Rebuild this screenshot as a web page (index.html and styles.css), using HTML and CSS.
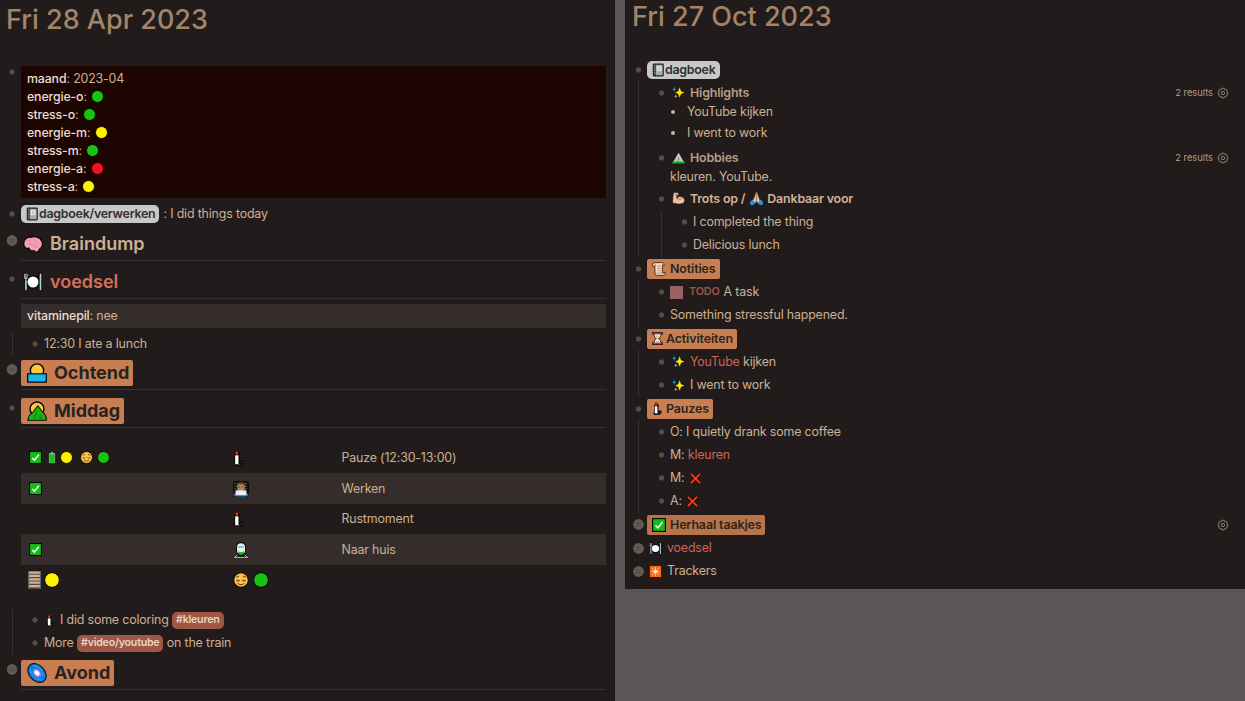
FILE: index.html
```
<!DOCTYPE html>
<html lang="nl">
<head>
<meta charset="utf-8">
<title>Dagboek</title>
<link rel="stylesheet" href="styles.css">
</head>
<body>
<svg class="sprite" aria-hidden="true">
  <symbol id="book" viewBox="0 0 24 24"><rect x="3" y="1" width="19" height="22" rx="2" fill="#222"/><path d="M6 3v18" stroke="#999" stroke-width="2" stroke-dasharray="1.5 1.5"/><rect x="8" y="3" width="12" height="18" fill="#a9a9a9"/><rect x="10" y="5" width="8" height="9" fill="#e8e8e8"/><path d="M12 8h4M12 11h4" stroke="#888"/></symbol>
  <symbol id="brain" viewBox="0 0 24 24"><path d="M1 13C0 7 5 3 9 4c5-2 12 0 13 4 3 3 1 8-2 10-1 4-5 5-7 2-3 1-5 0-6-3-3 1-6-1-6-4z" fill="#f5a0b4" stroke="#0b0808" stroke-width="1.6"/><path d="M6 8c3-1 4 2 3 4M12 5c-1 3 2 3 3 5M18 7c-3 1-2 4 1 5M5 13c2-2 4 0 6 0s3-1 5 2M12 17c1-2 4-1 6-2" fill="none" stroke="#dc7f98" stroke-width="1"/></symbol>
  <symbol id="plate" viewBox="0 0 24 24"><path d="M1 1h5v10l-1 12H2V11H1zM18 1h5v22h-4V12l-2-3z" fill="#050505"/><circle cx="12" cy="12" r="8" fill="#050505"/><circle cx="12" cy="12" r="6.6" fill="#fff"/><path d="M2 2v6h3V2M3.500 2v8" fill="none" stroke="#ddd"/><path d="M3.500 10v12M21 11v11" stroke="#9bd5ee" stroke-width="2"/><path d="M20 2v9h2V2z" fill="#ccc"/></symbol>
  <symbol id="sunwater" viewBox="0 0 24 24"><circle cx="12" cy="9" r="8" fill="#ffc83d" stroke="#080604" stroke-width="1.7"/><path d="M.8 13h22.400v10H.8z" fill="#1bb8ed" stroke="#080604" stroke-width="1.5"/><path d="M2 14h20" stroke="#08b" stroke-width="1"/></symbol>
  <symbol id="sunmount" viewBox="0 0 24 24"><circle cx="12" cy="9.500" r="8.300" fill="#ffc83d" stroke="#080604" stroke-width="1.7"/><path d="M1 23c1-5 2-7 5-8l7-9 7 9c2 1 3 5 3 8z" fill="#18b812" stroke="#080604" stroke-width="1.300"/><path d="M2 22c1-4 2-6 4-6l7-9 7 9c1 1 2 4 2 6z" fill="#18b812"/><path d="M13 8l-2 12-4 1zM16 15l-2 7 5 0z" fill="#10950f"/></symbol>
  <symbol id="check" viewBox="0 0 24 24"><path d="M0 0h24v24H0z" fill="#050b05"/><path d="M2 2h20v20H2z" fill="#17bd17"/><path d="M6 13l4 4 8-10" fill="none" stroke="#fff" stroke-width="2.600"/></symbol>
  <symbol id="battery" viewBox="0 0 14 24"><path d="M1 3h4V1h4v2h4v20H1z" fill="#a5b0a5" stroke="#090909"/><path d="M2.500 6h9v16h-9z" fill="#17bd22"/></symbol>
  <symbol id="dot" viewBox="0 0 24 24"><circle cx="12" cy="12" r="11" fill="currentColor" stroke="#080404" stroke-width="1.5"/></symbol>
  <symbol id="face" viewBox="0 0 24 24"><circle cx="12" cy="12" r="11" fill="#ffc348" stroke="#080604" stroke-width="1.600"/><path d="M5 8l4-2M15 6l4 2M5 12q3 3 5 0M14 12q3 3 5 0M7 17q5 4 10 0" fill="none" stroke="#6b431b" stroke-width="1.700"/></symbol>
  <symbol id="candle" viewBox="0 0 16 24"><path d="M0 21l2-3V6l3-6 5 5v11q5-1 6 2-1 5-6 6H2z" fill="#050505"/><path d="M3 8h5v13H3z" fill="#fff"/><path d="M5.500 1l2.200 4-2.200 3-2.200-3z" fill="#f33810"/><path d="M2 22h9M11 20q1-3 3-1" fill="none" stroke="#777"/></symbol>
  <symbol id="tech" viewBox="0 0 24 24"><rect width="24" height="24" rx="3" fill="#061006"/><path d="M2 4h20M2 8h20M2 12h20M2 16h20" stroke="#39824b" stroke-width="1.500" stroke-dasharray="3 1"/><path d="M1 23v-4q4-3 11-3t11 3v4z" fill="#6b45a0"/><circle cx="12" cy="9" r="6" fill="#b77f5c"/><path d="M5 9q0-8 7-8t7 8l-3-4H8z" fill="#5e3725"/><path d="M7 9h4M13 9h4" stroke="#6b4634" stroke-width="1.500"/><path d="M4 14h16v8H4z" fill="#e9eef2"/><path d="M4 21h16v2H4z" fill="#18aadd"/></symbol>
  <symbol id="train" viewBox="0 0 24 24"><path d="M0 24l6-7Q4 15 5 7q1-7 7-7t7 7q1 8-1 10l6 7z" fill="#080808"/><path d="M6 8q0-6 6-6t6 6v8H6z" fill="#eee"/><path d="M8 6h8v3H8z" fill="#5bcceb"/><path d="M7 14h10v2l-3 3h-4l-3-3z" fill="#17c923"/><path d="M9 13h6v2H9z" fill="#eee"/><path d="M7 19l-5 4h20l-5-4" fill="none" stroke="#bcc" stroke-width="1.500"/></symbol>
  <symbol id="rail" viewBox="0 0 16 24"><path d="M0 0h16v24H0z" fill="#57483f"/><path d="M.5 0v24M15.500 0v24" stroke="#8ea0a8"/><path d="M1 2h14M1 6.500h14M1 11h14M1 15.500h14M1 20h14" stroke="#d3b29a" stroke-width="3"/></symbol>
  <symbol id="galaxy" viewBox="0 0 24 24"><g transform="rotate(48 12 12)"><ellipse cx="12" cy="12" rx="13.500" ry="10" fill="#061329"/><ellipse cx="12" cy="12" rx="12" ry="8.600" fill="#087fe2"/><path d="M2 10Q8 2 20 9M3 15q9 6 19-1" fill="none" stroke="#3ba9f2" stroke-width="1"/><ellipse cx="12" cy="12" rx="6" ry="4" fill="#927de9"/><ellipse cx="12" cy="12" rx="3.600" ry="2.600" fill="#fff"/></g></symbol>
  <symbol id="spark" viewBox="0 0 24 24"><path d="M14 1l3 8 7 3-7 3-3 8-3-8-6-3 6-3z" fill="#ffe600" stroke="#050505"/><path d="M4 1l1 4 3 1-3 1-1 4-1-4-3-1 3-1z" fill="#22a9dd"/><path d="M7 15l1 3 3 1-3 1-1 3-1-3-3-1 3-1z" fill="#d979c6"/></symbol>
  <symbol id="mountain" viewBox="0 0 24 24"><path d="M0 22L12 3l12 19z" fill="#bbb" stroke="#070707"/><path d="M12 3l4 7 3 9h-6l-3-3-5 2z" fill="#ccc"/><path d="M12 9l-2 9 4-1z" fill="#858585"/><path d="M1 20q11-2 22 0v3H1z" fill="#16b818"/></symbol>
  <symbol id="muscle" viewBox="0 0 24 24"><path d="M3 1h8l2 5-5 1 1 5c4-6 12-4 14 2 2 6-5 9-11 8-5 0-9 0-11-3C2 15 1 8 3 1z" fill="#edbf9c" stroke="#17100d"/><path d="M5 5h6M8 7l3 7M11 15q3-4 7-2" fill="none" stroke="#9b6d52" stroke-width="1.500"/></symbol>
  <symbol id="pray" viewBox="0 0 24 24"><path d="M11 0L6 14l-3 4 4 5 5-5 5 5 4-5-3-4-5-14z" fill="#e7b897" stroke="#21120e"/><path d="M12 2v15" stroke="#77503d"/><path d="M0 18l5-4 4 6-3 4H1zM24 18l-5-4-4 6 3 4h5z" fill="#2492e6"/></symbol>
  <symbol id="scroll" viewBox="0 0 24 24"><path d="M4 1h14q3 0 3 4h-3v13h5q0 5-4 5H8q-3 0-3-4V7H1V4q0-3 3-3z" fill="#f4d6b9" stroke="#46291b" stroke-width="1.500"/><path d="M4 2q3 1 2 5M8 19h10q0 3 2 3M9 7h7M9 11h7M9 15h7" fill="none" stroke="#aa7756" stroke-width="1.200"/></symbol>
  <symbol id="hour" viewBox="0 0 20 24"><path d="M0 0h20v5h-3q0 4-4 7 4 3 4 7h3v5H0v-5h3q0-4 4-7-4-3-4-7H0z" fill="#2a1009"/><path d="M1 2.500h18M1 21.500h18" stroke="#d42f1d" stroke-width="2.500"/><path d="M4 4h12q0 5-5 8 5 3 5 8H4q0-5 5-8-5-3-5-8z" fill="#eee"/><path d="M7 7h6l-3 4zM6 19q4-6 8 0z" fill="#f2ac24"/></symbol>
  <symbol id="cross" viewBox="0 0 24 24"><path d="M2 2l20 20M22 2L2 22" stroke="#170300" stroke-width="6"/><path d="M2 2l20 20M22 2L2 22" stroke="#f5401c" stroke-width="3.800"/></symbol>
  <symbol id="burst" viewBox="0 0 24 24"><path d="M0 0h24v24H0z" fill="#180b04"/><path d="M1.500 1.500h21v21h-21z" fill="#ff6611"/><path d="M12 4v16M4 12h16M6 6l12 12M18 6L6 18" stroke="#ffd7bd" stroke-width="1.500"/><circle cx="12" cy="12" r="3" fill="#fff"/></symbol>
  <symbol id="gear" viewBox="0 0 24 24"><path d="M10 2.500h4l1 2.600 2.600-1.200 2.600 2.700-1.100 2.500 2.600 1v4l-2.600 1 1.100 2.500-2.700 2.600-2.500-1.100-1 2.600h-4l-1-2.600-2.500 1.100L3.800 17.600l1.100-2.500-2.600-1v-4l2.600-1-1.100-2.500 2.700-2.700L9 5.100z" fill="none" stroke="currentColor" stroke-width="1.800"/><circle cx="12" cy="12" r="3.300" fill="none" stroke="currentColor" stroke-width="1.800"/></symbol>
</svg>

<div class="app">
<main class="page page-left">
  <h1>Fri 28 Apr 2023</h1>
  <div class="row props-row"><i class="bullet"></i>
    <div class="props">
      <div><b>maand</b>: 2023-04</div>
      <div><b>energie-o</b>: <svg class="green"><use href="#dot"/></svg></div>
      <div><b>stress-o</b>: <svg class="green"><use href="#dot"/></svg></div>
      <div><b>energie-m</b>: <svg class="yellow"><use href="#dot"/></svg></div>
      <div><b>stress-m</b>: <svg class="green"><use href="#dot"/></svg></div>
      <div><b>energie-a</b>: <svg class="red"><use href="#dot"/></svg></div>
      <div><b>stress-a</b>: <svg class="yellow"><use href="#dot"/></svg></div>
    </div>
  </div>
  <div class="row tagline"><i class="bullet"></i><span class="tag-grey"><svg><use href="#book"/></svg>dagboek/verwerken</span><span class="after">: I did things today</span></div>
  <div class="row head first"><i class="bullet closed"></i><h2><svg><use href="#brain"/></svg>Braindump</h2></div>
  <div class="row head"><i class="bullet"></i><h2 class="link"><svg><use href="#plate"/></svg>voedsel</h2></div>
  <div class="pill-props"><b>vitaminepil</b>: nee</div>
  <div class="children"><div class="row"><i class="bullet"></i>12:30 I ate a lunch</div></div>
  <div class="row head first"><i class="bullet closed"></i><h2><span class="mark"><svg><use href="#sunwater"/></svg>Ochtend</span></h2></div>
  <div class="row head"><i class="bullet"></i><h2><span class="mark"><svg><use href="#sunmount"/></svg>Middag</span></h2></div>
  <div class="table">
    <div class="tr"><div class="small-icons"><svg><use href="#check"/></svg><svg class="batt"><use href="#battery"/></svg><svg class="yellow"><use href="#dot"/></svg><svg class="calm"><use href="#face"/></svg><svg class="green"><use href="#dot"/></svg></div><div><svg class="wick"><use href="#candle"/></svg></div><div>Pauze (12:30-13:00)</div></div>
    <div class="tr"><div class="small-icons"><svg><use href="#check"/></svg></div><div><svg><use href="#tech"/></svg></div><div>Werken</div></div>
    <div class="tr"><div></div><div><svg class="wick"><use href="#candle"/></svg></div><div>Rustmoment</div></div>
    <div class="tr"><div class="small-icons"><svg><use href="#check"/></svg></div><div><svg><use href="#train"/></svg></div><div>Naar huis</div></div>
    <div class="tr totals"><div><svg class="rail"><use href="#rail"/></svg><svg class="yellow"><use href="#dot"/></svg></div><div><svg><use href="#face"/></svg><svg class="green"><use href="#dot"/></svg></div><div></div></div>
  </div>
  <div class="children">
    <div class="row"><i class="bullet"></i><svg class="mini"><use href="#candle"/></svg>I did some coloring <span class="hashtag">#kleuren</span></div>
    <div class="row"><i class="bullet"></i>More <span class="hashtag">#video/youtube</span> on the train</div>
  </div>
  <div class="row head first"><i class="bullet closed"></i><h2><span class="mark"><svg><use href="#galaxy"/></svg>Avond</span></h2></div>
</main>

<aside class="page page-right">
  <h1>Fri 27 Oct 2023</h1>
  <div class="row"><i class="bullet"></i><span class="tag-grey"><svg><use href="#book"/></svg>dagboek</span></div>
  <div class="children">
    <div class="row"><i class="bullet"></i><svg class="emoji"><use href="#spark"/></svg><strong>Highlights</strong><span class="results">2 results<svg><use href="#gear"/></svg></span></div>
    <ul><li>YouTube kijken</li><li>I went to work</li></ul>
    <div class="row"><i class="bullet"></i><svg class="emoji"><use href="#mountain"/></svg><strong>Hobbies</strong><span class="results">2 results<svg><use href="#gear"/></svg></span></div>
    <p>kleuren. YouTube.</p>
    <div class="row bright"><i class="bullet"></i><svg class="emoji"><use href="#muscle"/></svg><strong>Trots op / </strong><svg class="emoji pray"><use href="#pray"/></svg><strong>Dankbaar voor</strong></div>
    <div class="children">
      <div class="row"><i class="bullet"></i>I completed the thing</div>
      <div class="row"><i class="bullet"></i>Delicious lunch</div>
    </div>
  </div>
  <div class="row section"><i class="bullet"></i><span class="label"><svg><use href="#scroll"/></svg>Notities</span></div>
  <div class="children">
    <div class="row"><i class="bullet"></i><i class="checkbox"></i><span class="todo">TODO</span>A task</div>
    <div class="row"><i class="bullet"></i>Something stressful happened.</div>
  </div>
  <div class="row section"><i class="bullet"></i><span class="label narrow"><svg><use href="#hour"/></svg>Activiteiten</span></div>
  <div class="children">
    <div class="row"><i class="bullet"></i><svg class="emoji"><use href="#spark"/></svg><a>YouTube</a> kijken</div>
    <div class="row"><i class="bullet"></i><svg class="emoji"><use href="#spark"/></svg>I went to work</div>
  </div>
  <div class="row section"><i class="bullet"></i><span class="label narrow"><svg><use href="#candle"/></svg>Pauzes</span></div>
  <div class="children">
    <div class="row"><i class="bullet"></i>O: I quietly drank some coffee</div>
    <div class="row"><i class="bullet"></i>M: <a>kleuren</a></div>
    <div class="row"><i class="bullet"></i>M: <svg class="no"><use href="#cross"/></svg></div>
    <div class="row"><i class="bullet"></i>A: <svg class="no"><use href="#cross"/></svg></div>
  </div>
  <div class="row section"><i class="bullet closed"></i><span class="label dim"><svg><use href="#check"/></svg>Herhaal taakjes</span><span class="results"><svg><use href="#gear"/></svg></span></div>
  <div class="row"><i class="bullet closed"></i><svg class="lead"><use href="#plate"/></svg><a>voedsel</a></div>
  <div class="row"><i class="bullet closed"></i><svg class="lead"><use href="#burst"/></svg>Trackers</div>
</aside>
</div>
</body>
</html>
```
FILE: styles.css
```
* { box-sizing: border-box; }
body {
  margin: 0;
  background: #5b5655;
  color: #cdb093;
  font: 12.400px/18px Inter, "Liberation Sans", sans-serif;
  font-optical-sizing: none;
  letter-spacing: -0.160px;
  overflow: hidden;
}
.sprite { position: absolute; width: 0; height: 0; }
.app { display: flex; align-items: flex-start; gap: 10px; width: 1245px; height: 701px; }
.page { background: #211c1b; overflow: hidden; }
.page-left { width: 615px; height: 701px; padding: 0 9px 0 3px; }
.page-right { width: 620px; height: 589px; padding: 0 16px 0 5px; }
h1, h2, p, ul { margin: 0; padding: 0; }
h1 { font-size: 27px; font-weight: 450; color: #a38468; line-height: 39px; letter-spacing: 0; }
.page-left h1 { height: 66px; padding-left: 3px; }
.page-right h1 { height: 58px; padding-left: 2px; line-height: 34px; }
svg { display: inline-block; flex: none; overflow: visible; }
b { font-weight: 500; color: #e9dcd2; }
strong { font-weight: 600; color: #b99d85; }
.bright strong { color: #d2b293; }
a { color: #cc6553; }
.green { color: #18c40f; }
.yellow { color: #fff000; }
.red { color: #ee1522; }

.row { display: flex; align-items: center; height: 23.150px; white-space: pre; }
.bullet { flex: none; width: 18px; height: 12px; background: radial-gradient(circle, #574d48 2.300px, transparent 2.900px); }
.bullet.closed { height: 13px; background: radial-gradient(circle, #5d5049 2.500px, #70635b 3px, #62564f 3.500px, #62564f 5px, transparent 5.600px); }
.page-right .bullet { width: 17px; }
.children { margin-left: 9px; border-left: 1px solid #373130; padding-left: 13px; }
.page-right .children { margin-left: 8px; padding-left: 14px; }

.props-row { height: 132px; align-items: flex-start; white-space: normal; }
.props { flex: 1; height: 132px; background: #1c0501; padding: 4px 6px 2px; }
.props div { height: 18px; }
.props svg { width: 13px; height: 13px; margin-left: 1px; vertical-align: -2px; }
.tagline { height: 24px; margin-top: 4px; }
.tag-grey { display: flex; align-items: center; height: 18px; padding: 0 4px; border-radius: 5px; background: #c9c8c8; color: #30302f; font-weight: 600; letter-spacing: -0.250px; }
.tag-grey svg { width: 14px; height: 14px; }
.after { margin-left: 4px; }

.head { height: 38px; align-items: flex-end; }
.head.first { height: 35px; }
.head .bullet { margin-bottom: 14px; }
h2 { flex: 1; display: flex; align-items: flex-end; align-self: stretch; padding-bottom: 3px; border-bottom: 1px solid #373231; font-size: 18px; line-height: 26px; font-weight: 600; letter-spacing: 0; }
h2 > svg { width: 20px; height: 20px; margin: 0 7px 3px 2px; }
h2.link { color: #d56f5b; }
.mark { display: flex; align-items: center; height: 26px; padding: 0 4px 0 6px; border-radius: 2px; background: #c87e50; color: #262423; font-weight: 700; }
.mark svg { width: 20px; height: 20px; margin-right: 7px; }
.pill-props { height: 24px; margin: 5px 0 4px 18px; padding: 3px 6px; background: #352d2b; }

.table { margin: 14.500px 0 13px 18px; }
.tr { display: grid; grid-template-columns: 205px 108.500px 1fr; align-items: center; height: 30.600px; padding-left: 7px; }
.tr:nth-child(even) { background: #352d2b; }
.tr > div { display: flex; align-items: center; }
.tr svg { width: 16px; height: 16px; }
.tr .wick { width: 11px; }
.tr .small-icons svg { width: 13px; height: 13px; margin-left: 1px; }
.tr .small-icons .batt { width: 8px; margin: 0 3px 0 6px; }
.tr .small-icons .calm { margin: 0 3px 0 7px; }
.tr .rail { width: 13px; height: 18px; margin-right: 3px; }
.totals .green { margin-left: 4px; }
.mini { width: 9px; height: 13px; margin: 0 5px 0 2px; }
.hashtag { height: 17px; padding: 0 4px; border-radius: 5px; background: #9e5745; color: #e9d5c8; font-size: 10.700px; line-height: 16px; font-weight: 600; letter-spacing: -0.250px; }

ul { list-style: none; height: 42px; }
li { height: 15px; line-height: 15px; padding-left: 19px; display: flex; align-items: center; }
li::before { content: ""; width: 4px; height: 4px; margin: 0 12px 0 -1px; border-radius: 50%; background: #cdb093; }
li + li { height: 27px; }
.page-right p { height: 18px; padding-left: 17px; line-height: 16px; }
.emoji { width: 13px; height: 13px; margin: 0 5px 0 2px; }
.emoji.pray { margin: 0 4px 0 2px; }
.results { display: flex; align-items: center; margin-left: auto; font-size: 9.300px; letter-spacing: 0; color: #b49b85; }
.results svg { width: 12px; height: 12px; margin-left: 4px; color: #9b8674; }
.section { margin-top: .5px; }
.label { display: flex; align-items: center; height: 19.500px; padding: 0 4px 0 5px; border-radius: 2px; background: #c87e50; color: #292521; font-weight: 600; letter-spacing: -0.100px; }
.label svg { width: 14px; height: 14px; margin-right: 4px; }
.label.narrow svg { width: 11px; height: 13px; margin-right: 3px; }
.label.dim { background: #b87448; }
.checkbox { width: 13px; height: 13px; margin-right: 6px; background: #9b6063; }
.todo { margin-right: 4px; color: #9b5446; font-size: 10.800px; font-weight: 600; }
.no { width: 11px; height: 11px; margin-left: 2px; }
.lead { width: 13px; height: 13px; margin: 0 5px 0 2px; }
```
